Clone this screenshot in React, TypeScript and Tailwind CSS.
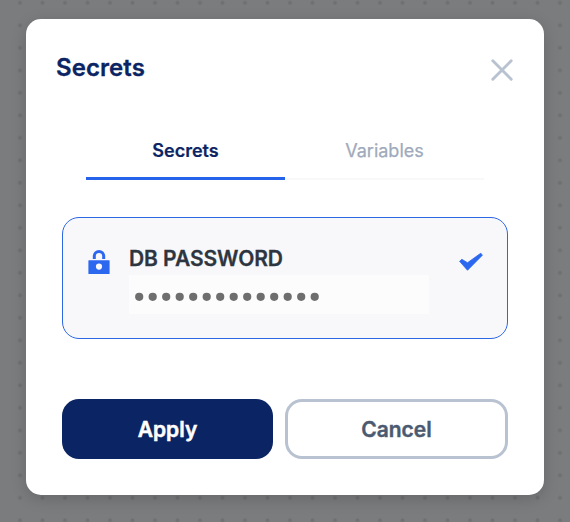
function CloseIcon() {
  return (
    <svg width="24" height="24" viewBox="0 0 24 24" fill="none" stroke="#b8c2d0" strokeWidth="2.9" strokeLinecap="round">
      <path d="M2.8 2.8 21.2 21.2M21.2 2.8 2.8 21.2" />
    </svg>
  );
}

function LockIcon() {
  return (
    <svg className="shrink-0" width="22" height="24" viewBox="0 0 22 24" fill="#2c67f0">
      <path
        fillRule="evenodd"
        d="M0.9 10.2H21.1Q21.6 10.2 21.6 10.7V23.5Q21.6 24 21.1 24H0.9Q0.4 24 0.4 23.5V10.7Q0.4 10.2 0.9 10.2ZM11 13.5A3.1 3.1 0 1 0 11 19.7A3.1 3.1 0 1 0 11 13.5Z"
      />
      <path d="M4.8 9V6.2A6.2 6.2 0 0 1 17.2 6.2V9H14.2V6.2A3.2 3.2 0 0 0 7.8 6.2V9Z" />
    </svg>
  );
}

function CheckIcon() {
  return (
    <svg className="shrink-0" width="24" height="19" viewBox="0 0 24 19" fill="#2c67f0" stroke="#2c67f0" strokeWidth="0.8" strokeLinejoin="round">
      <path d="M0.6 9.3 2.8 7.3 8.5 10.7 21.8 1.2 23.4 3.2 8.5 18.3Z" />
    </svg>
  );
}

export default function App() {
  return (
    <div className="h-[522px] w-[570px] overflow-hidden bg-[#7b7c7e] bg-[radial-gradient(circle_at_center,#6f7072_1.7px,transparent_2.3px)] bg-[size:22.5px_22.5px] bg-[position:8.75px_-8.45px] px-[26px] pt-[19px] font-['Inter',sans-serif]">
      <div className="flex h-[476px] w-[518px] flex-col rounded-[15px] bg-white shadow-[0_4px_16px_rgba(0,0,0,0.16)]">
        <header className="flex items-start justify-between pt-[33px] pr-[30px] pl-[30px]">
          <h2 className="text-[24px] leading-[32px] font-semibold tracking-[0.08px] text-[#0b2463] [-webkit-text-stroke:0.3px_#0b2463]">
            Secrets
          </h2>
          <button className="mt-[6px]" aria-label="Close">
            <CloseIcon />
          </button>
        </header>
        <nav className="mx-[60px] mt-[47px] flex h-[49px] text-[18px] leading-[24px]">
          <button className="flex w-[199px] items-start justify-center border-b-3 border-[#2563eb] pt-[8px] font-semibold text-[#0b2463] [-webkit-text-stroke:0.2px_#0b2463]">
            Secrets
          </button>
          <button className="flex w-[199px] items-start justify-center border-b-2 border-[#f8f8f9] pt-[8px] text-[#a0aabb] [-webkit-text-stroke:0.25px_#a0aabb]">
            Variables
          </button>
        </nav>
        <section className="mx-[36px] mt-[37px] flex h-[122px] items-start rounded-[17px] border border-[#2c67e4] bg-[#f8f8fa] pr-[24px] pl-[25px]">
          <div className="mt-[32px]">
            <LockIcon />
          </div>
          <div className="ml-[19px] w-[300px] pt-[26px]">
            <h3 className="text-[21px] leading-[30px] font-semibold tracking-[-0.06px] text-[#2d3540] [-webkit-text-stroke:0.3px_#2d3540]">
              DB PASSWORD
            </h3>
            <div className="mt-[1px] flex h-[39px] items-center bg-[#fcfcfc] pt-[5px] pl-[5.6px]">
              <svg width="190" height="10" viewBox="0 0 190 10" fill="#6e6e6e">
                {Array.from({ length: 14 }, (_, i) => (
                  <circle key={i} cx={4.2 + i * 13.5} cy="4.8" r="4.1" />
                ))}
              </svg>
            </div>
          </div>
          <div className="mt-[34px] ml-auto">
            <CheckIcon />
          </div>
        </section>
        <footer className="mx-[36px] mt-[60px] flex h-[60px] gap-[12px] text-[21px] font-semibold">
          <button className="w-[211px] rounded-[17px] bg-[#0b2463] pt-[2px] text-white [-webkit-text-stroke:0.5px_white]">
            Apply
          </button>
          <button className="w-[223px] rounded-[17px] border-3 border-[#b8c2d0] pt-[2px] text-[#4b5a70] [-webkit-text-stroke:0.4px_#4b5a70]">
            Cancel
          </button>
        </footer>
      </div>
    </div>
  );
}
